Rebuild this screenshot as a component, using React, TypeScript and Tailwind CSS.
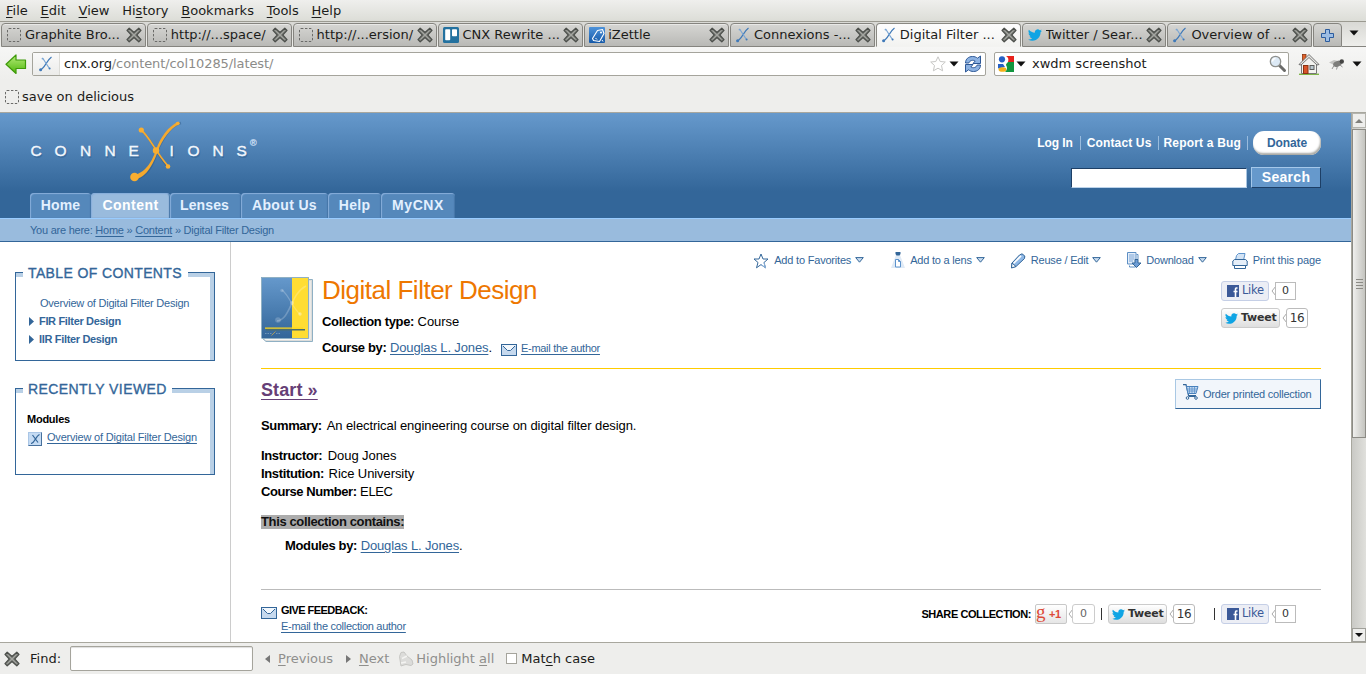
import React from "react";

const CloseX = () => (
  <svg width="16" height="16" viewBox="0 0 16 16" className="shrink-0">
    <path d="M3.2 1.2 8 5.6 12.8 1.2 15 3.4 10.7 8 15 12.6 12.8 14.8 8 10.4 3.2 14.8 1 12.6 5.3 8 1 3.4Z" fill="#878984" stroke="#4d504c" strokeWidth="1.3" strokeLinejoin="round" />
    <path d="M3.5 3.5 12.5 12.5M12.5 3.5 3.5 12.5" stroke="#a3a5a0" strokeWidth="1" />
  </svg>
);

const Dashed = () => (
  <svg width="16" height="16" viewBox="0 0 16 16" className="shrink-0">
    <rect x="1.5" y="1.5" width="13" height="13" rx="1.5" fill="none" stroke="#6b6b69" strokeDasharray="2.4 1.6" />
  </svg>
);

const CnxIcon = () => (
  <svg width="16" height="16" viewBox="0 0 16 16" className="shrink-0">
    <path d="M2 14C7 12.5 8 5 13.5 1" fill="none" stroke="#3f79b8" strokeWidth="1.2" />
    <path d="M4.5 2C6 4 9 9 11.5 12.5" fill="none" stroke="#7ba6d4" strokeWidth="1.2" />
    <circle cx="2.6" cy="13.7" r="1.5" fill="#3f79b8" />
    <circle cx="4.5" cy="2.6" r="0.9" fill="#7ba6d4" />
    <circle cx="11.6" cy="12.4" r="1" fill="#3f79b8" />
  </svg>
);

const Trello = () => (
  <svg width="16" height="16" viewBox="0 0 16 16" className="shrink-0">
    <rect width="16" height="16" rx="1.5" fill="#23719f" />
    <rect x="2.2" y="2.2" width="5" height="11" rx="0.8" fill="#fff" />
    <rect x="9" y="2.2" width="5" height="7" rx="0.8" fill="#fff" />
  </svg>
);

const IZettle = () => (
  <svg width="16" height="16" viewBox="0 0 16 16" className="shrink-0">
    <defs>
      <linearGradient id="iz" x1="0" y1="0" x2="0" y2="1">
        <stop offset="0" stopColor="#4e93da" />
        <stop offset="1" stopColor="#1559a8" />
      </linearGradient>
    </defs>
    <rect width="16" height="16" rx="1" fill="url(#iz)" />
    <path d="M3.5 11.5 8.500 3.5 13.5 2.5 15 6.5 10.5 14.5 4.5 13.5Z" fill="none" stroke="#fff" strokeWidth="1.1" strokeLinejoin="round" />
    <circle cx="12" cy="5.6" r="1" fill="#fff" />
    <path d="M6.500 11 8 12.500M13 13l1 1.500" stroke="#fff" strokeWidth="1" />
  </svg>
);

const Bird = ({ size = 14 }: { size?: number }) => (
  <svg width={size} height={size} viewBox="0 0 24 24" className="shrink-0">
    <path d="M23.95 4.57a10 10 0 0 1-2.82.77 4.96 4.96 0 0 0 2.16-2.72c-.95.55-2 .96-3.13 1.18a4.92 4.92 0 0 0-8.38 4.48C7.69 8.1 4.07 6.13 1.64 3.16a4.92 4.92 0 0 0 1.52 6.57 4.9 4.9 0 0 1-2.23-.61v.06c0 2.38 1.7 4.37 3.95 4.82a5 5 0 0 1-2.21.09 4.94 4.94 0 0 0 4.6 3.42A9.87 9.87 0 0 1 0 19.54a14 14 0 0 0 7.55 2.21c9.05 0 14-7.5 14-13.98 0-.21 0-.42-.02-.63a9.94 9.94 0 0 0 2.46-2.55z" fill="#0fa4e4" />
  </svg>
);

const Down = () => (
  <svg width="10" height="6" viewBox="0 0 10 6" className="shrink-0">
    <path d="M0.5 0.5H9.5L5 5.5Z" fill="#111" />
  </svg>
);

const tabs: { label: string; icon: React.ReactNode; active?: boolean }[] = [
  { label: "Graphite Bro...", icon: <Dashed /> },
  { label: "http://...space/", icon: <Dashed /> },
  { label: "http://...ersion/", icon: <Dashed /> },
  { label: "CNX Rewrite ...", icon: <Trello /> },
  { label: "iZettle", icon: <IZettle /> },
  { label: "Connexions -...", icon: <CnxIcon /> },
  { label: "Digital Filter ...", icon: <CnxIcon />, active: true },
  { label: "Twitter / Sear...", icon: <span className="flex w-[16px] justify-center"><Bird /></span> },
  { label: "Overview of ...", icon: <CnxIcon /> },
];

function Chrome() {
  return (
    <div className="font-['DejaVu_Sans',sans-serif] text-[13px] text-[#1c1c1a]">
      <div className="flex h-[22px] gap-[12.8px] border-b border-[#9b9a91] bg-gradient-to-b from-[#efefed] to-[#dcddd7] pl-[6px] leading-[21px]">
        <span><u>F</u>ile</span>
        <span><u>E</u>dit</span>
        <span><u>V</u>iew</span>
        <span>Hi<u>s</u>tory</span>
        <span><u>B</u>ookmarks</span>
        <span><u>T</u>ools</span>
        <span><u>H</u>elp</span>
      </div>
      <div className="flex h-[25px] items-end bg-gradient-to-b from-[#d9d9d5] to-[#efefec] pl-px">
        {tabs.map((t) => (
          <div
            key={t.label}
            className={
              t.active
                ? "mr-px flex h-[24px] w-[144.8px] shrink-0 items-center rounded-t-[4px] border border-b-[#f3f3f1] border-[#8a8983] bg-gradient-to-b from-[#fdfdfd] to-[#f3f3f1] pr-[3px] pl-[4px]"
                : "mr-px flex h-[24px] w-[144.8px] shrink-0 items-center rounded-t-[4px] border border-[#85847f] bg-gradient-to-b from-[#d6d6d3] to-[#b9b9b6] pr-[3px] pl-[4px] shadow-[inset_0_1px_0_#e8e8e6]"
            }
          >
            {t.icon}
            <span className="ml-[3px] min-w-0 flex-1 overflow-hidden whitespace-nowrap">{t.label}</span>
            <CloseX />
          </div>
        ))}
        <div className="flex h-[24px] w-[29px] shrink-0 items-center justify-center rounded-t-[4px] border border-[#85847f] bg-gradient-to-b from-[#d6d6d3] to-[#b9b9b6]">
          <svg width="15" height="15" viewBox="0 0 15 15">
            <path d="M5.5 1.5h4v4h4v4h-4v4h-4v-4h-4v-4h4z" fill="#9dbde3" stroke="#2c5c9e" />
          </svg>
        </div>
        <div className="flex h-[24px] flex-1 items-center justify-center border-b border-[#85847f] pb-[3px]">
          <Down />
        </div>
      </div>
      <div className="flex h-[33px] items-center bg-gradient-to-b from-[#f6f6f5] to-[#eeeeec] pt-[1px] pl-[5px]">
        <svg width="22" height="20" viewBox="0 0 22 20" className="shrink-0">
          <defs>
            <linearGradient id="ga" x1="0" y1="0" x2="0" y2="1">
              <stop offset="0" stopColor="#b6ec7a" />
              <stop offset="1" stopColor="#4fb70c" />
            </linearGradient>
          </defs>
          <path d="M1 10.2 11 1v5h9.5v8.500H11v5z" fill="url(#ga)" stroke="#3f9a0a" strokeWidth="1.2" strokeLinejoin="round" />
        </svg>
        <div className="ml-[5px] flex h-[24px] w-[954px] shrink-0 items-center rounded-[2px] border border-[#a5a49c] bg-white">
          <div className="flex h-full w-[27px] items-center justify-center border-r border-[#dcdcd8] bg-gradient-to-b from-[#fafafa] to-[#ececea]">
            <CnxIcon />
          </div>
          <span className="ml-[4px] flex-1 tracking-[-0.1px] text-[#8c8c89]"><span className="text-[#1c1c1a]">cnx.org</span>/content/col10285/latest/</span>
          <svg width="16" height="16" viewBox="0 0 16 16">
            <path d="M8 .8 10.200 5.500 15.300 6 11.500 9.500 12.600 14.800 8 12.200 3.400 14.800 4.500 9.500.7 6 5.800 5.500Z" fill="#fff" stroke="#c6c6c4" />
          </svg>
          <span className="ml-[3px]"><Down /></span>
          <svg width="18" height="18" viewBox="0 0 18 18" className="mr-[3px] ml-[5px]">
            <path d="M1.500 8C1.500 4 4.500 1.500 8.500 1.500 10.500 1.500 12 2 13.500 3.200L16.500 1v7.500H9L11.200 6C9 4.800 6 5 4.800 8Z" fill="#8db2e2" stroke="#2c5796" strokeLinejoin="round" />
            <path d="M16.500 10c0 4-3 6.500-7 6.500-2 0-3.500-.5-5-1.700L1.500 17V9.500H9L6.800 12c2.200 1.200 5.200 1 6.400-2Z" fill="#8db2e2" stroke="#2c5796" strokeLinejoin="round" />
          </svg>
        </div>
        <div className="ml-[8px] flex h-[24px] w-[295px] shrink-0 items-center rounded-[2px] border border-[#a5a49c] bg-white pl-[3px]">
          <svg width="16" height="16" viewBox="0 0 16 16">
            <path d="M8 0h8v6h-6C11 3 10 1 8 0Z" fill="#e8221c" />
            <path d="M10 6h6v10H7c3-3 2-5 1-7 0-1 1-2 2-3Z" fill="#12963f" />
            <circle cx="4" cy="3.300" r="3.100" fill="#2660c4" />
            <path d="M0 8h5l2 3-7 1.500Z" fill="#2660c4" />
            <ellipse cx="4.500" cy="13.500" rx="3.900" ry="2.300" fill="#f4b119" />
          </svg>
          <span className="ml-[2px]"><Down /></span>
          <span className="ml-[6px] flex-1">xwdm screenshot</span>
          <svg width="18" height="18" viewBox="0 0 18 18" className="mr-[1px]">
            <path d="M10 10 15.500 15.500" stroke="#6b6b69" strokeWidth="3" strokeLinecap="round" />
            <circle cx="6.500" cy="6.500" r="5.200" fill="#dce9f5" stroke="#8f918e" strokeWidth="1.300" />
            <path d="M3.500 6.500a3 3 0 0 1 3-3" stroke="#fff" strokeWidth="1.500" fill="none" />
          </svg>
        </div>
        <svg width="22" height="22" viewBox="0 0 22 22" className="ml-[9px] shrink-0">
          <path d="M1 21.300H21" stroke="#7fb548" strokeWidth="1.400" />
          <rect x="4.500" y="1.500" width="3.500" height="6" fill="#e0622a" stroke="#8a3310" strokeWidth=".8" />
          <path d="M3.500 10 11 3l7.500 7v10.500h-15z" fill="#f3f3f0" stroke="#777" />
          <path d="M1 11.500 11 1.500l10 10-2 .5-8-7.500L3 12Z" fill="#e6e6e3" stroke="#666" strokeWidth=".9" />
          <rect x="5.500" y="12.500" width="4.500" height="8" fill="#d9532a" stroke="#8a3310" />
          <rect x="12" y="12.500" width="4" height="4" fill="#b9c7cf" stroke="#5e5e5c" />
        </svg>
        <svg width="17" height="16" viewBox="0 0 17 16" className="ml-[9px] shrink-0">
          <path d="M0 6.500 5 4 11 5.500 5 9Z" fill="#c4c4c2" />
          <ellipse cx="8.500" cy="7.800" rx="4.500" ry="2.800" fill="#7d7d7b" transform="rotate(-20 8.500 7.800)" />
          <circle cx="12.800" cy="5.500" r="2.200" fill="#444443" />
          <path d="M5 9.500 3 13M8.500 10l-1 3.500M11 9l2.500 2" stroke="#888" strokeWidth=".9" />
        </svg>
        <span className="ml-[6px]"><Down /></span>
      </div>
      <div className="flex h-[33px] items-center border-b border-[#a8a79e] bg-[#eeeeec] pt-[2px] pl-[4px]">
        <Dashed />
        <span className="ml-[2px]">save on delicious</span>
      </div>
    </div>
  );
}

const navTabs = [
  { label: "Home", cls: "w-[61px] bg-[#5588bb] text-[#e3f0ff] tracking-[0.2px]" },
  { label: "Content", cls: "w-[79px] bg-[#99bbdd] text-white tracking-[0.45px]" },
  { label: "Lenses", cls: "w-[71px] bg-[#5588bb] text-[#e3f0ff] pr-[2px] tracking-[0.1px]" },
  { label: "About Us", cls: "w-[87px] bg-[#5588bb] text-[#e3f0ff] tracking-[0.35px]" },
  { label: "Help", cls: "w-[53px] bg-[#5588bb] text-[#e3f0ff] tracking-[0.3px]" },
  { label: "MyCNX", cls: "w-[74px] bg-[#5588bb] text-[#e3f0ff] tracking-[0.6px]" },
];

function Header() {
  return (
    <header>
      <div className="flex h-[105px] flex-col justify-between bg-[linear-gradient(#6699cc,#336699_78px)]">
        <div className="flex justify-between">
          <svg width="250" height="72" viewBox="25 113 250 72" className="ml-[25px]">
            <g fill="#24507c" opacity=".35" fontFamily="Liberation Sans" fontSize="16">
              <text x="31.500 55.500 81 105.500 129.500 171 188.500 213.500 237.500" y="157.500">CONNEIONS</text>
            </g>
            <g fill="#f2f7fd" stroke="#f2f7fd" strokeWidth=".4" fontFamily="Liberation Sans" fontSize="15.500">
              <text x="30.500 54.500 80 104.500 128.500 169.500 187.500 212.500 236.500" y="156">CONNEIONS</text>
            </g>
            <g fill="none" stroke="#27527f" opacity=".4">
              <path d="M136 179C154 174 156 150 160 145C166 133 172 125 181 123" strokeWidth="2.500" />
              <path d="M143 132C151 138 158 158 169 168" strokeWidth="2" />
            </g>
            <path d="M133 175.500C148 172 153 158 156 150C160 138 168 126 179 121.500L180 124C170 128 162 140 158 151C153 165 145 179 135 179Z" fill="#f5a92e" />
            <path d="M141 130C150 137 154 150 168 166" fill="none" stroke="#f5a92e" strokeWidth="1.800" />
            <circle cx="134.500" cy="177" r="4.300" fill="#f9ae31" />
            <circle cx="141.300" cy="130" r="2.600" fill="#f9ae31" />
            <circle cx="156" cy="150.500" r="3.200" fill="#f9ae31" />
            <circle cx="168" cy="166.500" r="2.300" fill="#f9ae31" />
            <circle cx="177.500" cy="123.500" r="1.700" fill="#f9ae31" />
            <text x="250" y="145.500" fontSize="9" fill="#c6dcf2" stroke="#c6dcf2" strokeWidth=".3" fontFamily="Liberation Sans">®</text>
          </svg>
          <div className="mr-[30px] flex flex-col items-end pt-[18px] font-bold text-white">
            <div className="flex items-center text-[12px] tracking-[0.15px]">
              <span className="border-r border-[#99bbdd] pr-[7px] leading-[14px] tracking-[-0.1px]">Log In</span>
              <span className="border-r border-[#99bbdd] pr-[6px] pl-[6px] leading-[14px]">Contact Us</span>
              <span className="border-r border-[#99bbdd] pr-[6px] pl-[5px] leading-[14px] tracking-[0.18px]">Report a Bug</span>
              <span className="ml-[5px] flex h-[24px] w-[68px] items-center justify-center rounded-[11px] bg-white tracking-[-0.1px] text-[#336699] shadow-[inset_-1px_-2px_2px_#a9a9a4]">Donate</span>
            </div>
            <div className="mt-[12px] flex items-center gap-[4px]">
              <div className="h-[20px] w-[176px] border border-t-[#1d3f66] border-r-[#a9c6e2] border-b-[#bcd3ea] border-l-[#1d3f66] bg-white" />
              <div className="flex h-[21px] w-[70px] items-center justify-center border border-t-[#a5c8ea] border-r-[#1d3f66] border-b-[#1d3f66] border-l-[#a5c8ea] bg-[#6699cc] text-[14px] tracking-[0.3px]">Search</div>
            </div>
          </div>
        </div>
        <div className="flex pl-[30px] text-[14px] font-bold">
          {navTabs.map((t) => (
            <div key={t.label} className={`flex h-[25px] items-center justify-center rounded-t-[4px] shadow-[inset_1px_1px_1px_#88aedb,inset_-1px_0_1px_#4576a8] ${t.cls}`}>
              {t.label}
            </div>
          ))}
        </div>
      </div>
      <div className="h-[24px] border-t border-b border-t-[#99ccff] border-b-[#336699] bg-[#99bbdd] pl-[30px] text-[11px] leading-[23px] tracking-[-0.24px] text-[#336699]">
        You are here: <u>Home</u> » <u>Content</u> » Digital Filter Design
      </div>
    </header>
  );
}

function Box({ title, titleCls, children }: { title: string; titleCls: string; children: React.ReactNode }) {
  return (
    <section className="flex w-[200px] flex-col text-[#336699]">
      <div className="flex h-[5px]">
        <div className="w-[8px] border-t border-l border-[#336699] bg-[#b9d0e6]" />
        <h2 className={`-mt-[9px] h-[20px] pl-[5px] text-[14px] leading-[20px] whitespace-nowrap [-webkit-text-stroke:0.35px] ${titleCls}`}>{title}</h2>
        <div className="flex-1 border-t border-r border-[#336699] bg-[#b9d0e6]" />
      </div>
      <div className="flex flex-1 border-x border-b border-[#336699]">
        <div className="flex-1">{children}</div>
        <div className="w-[4px] bg-[#b9d0e6]" />
      </div>
    </section>
  );
}

const TocArrow = () => (
  <svg width="5" height="9" viewBox="0 0 5 9" className="mr-[5px]">
    <path d="M0 0 5 4.500 0 9Z" fill="#336699" />
  </svg>
);

function Sidebar() {
  return (
    <aside className="w-[231px] shrink-0 border-r border-[#cccccc] pt-[30px] pl-[15px]">
      <div className="flex h-[89px]">
        <Box title="TABLE OF CONTENTS" titleCls="w-[165px] tracking-[0.38px]">
          <div className="flex flex-col pt-[17px] pl-[13px] text-[11px] leading-[18px]">
            <span className="pl-[11px] tracking-[-0.22px] whitespace-nowrap">Overview of Digital Filter Design</span>
            <span className="flex items-center font-bold tracking-[-0.33px]"><TocArrow />FIR Filter Design</span>
            <span className="flex items-center font-bold tracking-[-0.33px]"><TocArrow />IIR Filter Design</span>
          </div>
        </Box>
      </div>
      <div className="mt-[27px] flex h-[87px]">
        <Box title="RECENTLY VIEWED" titleCls="w-[149px] tracking-[0.42px]">
          <div className="pt-[17px] pl-[11px] text-[11px] leading-[18px]">
            <div className="font-bold tracking-[-0.25px] text-black">Modules</div>
            <div className="flex items-center tracking-[-0.2px]">
              <span className="mt-[3px] mr-[5px] ml-px flex size-[14px] items-center justify-center border border-t-[#aac6e6] border-r-[#47709c] border-b-[#47709c] border-l-[#aac6e6] bg-[#c5dbf3]">
                <svg width="10" height="10" viewBox="0 0 10 10">
                  <path d="M1 9.500C5 9 5.500 2 9.500.5M2.500 1 8 8.500" fill="none" stroke="#336699" strokeWidth="1.200" />
                </svg>
              </span>
              <u className="whitespace-nowrap">Overview of Digital Filter Design</u>
            </div>
          </div>
        </Box>
      </div>
    </aside>
  );
}

const ToolDown = () => (
  <svg width="9" height="6" viewBox="0 0 9 6" className="mb-[1px] ml-[4px]">
    <path d="M.7.600H8.300L4.500 5.200Z" fill="#c9dcef" stroke="#336699" />
  </svg>
);

const Mail = () => (
  <svg width="16" height="12" viewBox="0 0 16 12" className="shrink-0">
    <rect x=".5" y=".5" width="15" height="11" fill="#c6d9ee" stroke="#336699" />
    <path d="M1 1H15L9.500 6.500H6.500Z" fill="#f2f7fc" />
    <path d="M2 2 6.500 6.500H9.500L14 2" fill="none" stroke="#336699" />
  </svg>
);

function Toolbar() {
  return (
    <div className="flex h-[18px] items-center justify-end text-[11px] tracking-[-0.2px] text-[#336699]">
      <svg width="16" height="16" viewBox="0 0 16 16" className="mt-[2px] mr-[5px]">
        <path d="M8 1 10 6H15L11 9.500 12.500 14.800 8 11.600 3.500 14.800 5 9.500 1 6H6Z" fill="#fff" stroke="#336699" />
        <path d="M11 9.500 12.500 14.800 8 11.600" fill="none" stroke="#8db3dc" />
      </svg>
      Add to Favorites<ToolDown />
      <svg width="14" height="17" viewBox="0 0 14 17" className="mr-[5px] ml-[27px]">
        <path d="M5 3H9L14 16H0Z" fill="#dfeaf6" />
        <path d="M4.500 0h5v2L8.500 3.500H5.500L4.500 2Z" fill="#336699" />
        <path d="M4.500 7.500h3l2 2V15h-5z" fill="#fff" stroke="#5d93cc" />
        <path d="M7.500 7.500v2h2" fill="none" stroke="#5d93cc" />
      </svg>
      Add to a lens<ToolDown />
      <svg width="16" height="16" viewBox="0 0 16 16" className="mt-[2px] mr-[5px] ml-[25px]">
        <path d="M1.500 14.500 2 10 9.500 2 12 .8 14.800 3 14.500 5.500 6 13.500Z" fill="#8fb8e6" stroke="#336699" strokeLinejoin="round" />
        <path d="M3.500 10.500 11 2.800" stroke="#fff" strokeWidth="1.700" />
        <path d="M2 10 6 13.500 1.500 15Z" fill="#fff" stroke="#336699" />
      </svg>
      Reuse / Edit<ToolDown />
      <svg width="16" height="17" viewBox="0 0 16 17" className="mt-px mr-[4px] ml-[25px]">
        <path d="M1.500.5h8.500v11.500h-8.500z" fill="#e4eefa" stroke="#5d8fc4" />
        <path d="M3.500 13.500v1.500h6M10.500 2.500h1.500v5" fill="none" stroke="#5d8fc4" />
        <path d="M3 3h5.500M3 5h5.500M3 7h5.500M3 9h4" stroke="#7aa5d6" />
        <path d="M9 7.500h3V11h3L10.500 15.500 6 11h3z" fill="#6e9ed6" stroke="#336699" />
      </svg>
      Download<ToolDown />
      <svg width="16" height="16" viewBox="0 0 16 16" className="mt-px mr-[5px] ml-[25px]">
        <path d="M3.500 7 4.500 2.500 6.500.5H13L12.500 3 11.500 7" fill="#d3e3f4" stroke="#5d93cc" />
        <path d="M.8 8 2.500 6.500H13.500L15.200 8V12.500H.8Z" fill="#e6eff9" stroke="#336699" />
        <path d="M2.500 12.500h11v3h-11z" fill="#fff" stroke="#336699" />
      </svg>
      <span className="tracking-[-0.13px]">Print this page</span>
    </div>
  );
}

const Notch = () => (
  <svg width="5" height="10" viewBox="0 0 5 10" className="-mr-px shrink-0">
    <path d="M5 0 1 5 5 10" fill="#fff" stroke="#aaa" />
  </svg>
);

function Like() {
  return (
    <div className="flex items-center font-['DejaVu_Sans',sans-serif] text-[11px] tracking-normal">
      <div className="flex h-[20px] w-[48px] items-center rounded-[3px] border border-[#c5cfe6] bg-[#eceef5] pl-[5px] text-[#3b5998]">
        <svg width="12" height="12" viewBox="0 0 12 12" className="mr-[3px] shrink-0">
          <rect width="12" height="12" fill="#3b5998" />
          <path d="M10.500 3H9.300Q8.500 3 8.500 4V12M6.500 6.500h4" fill="none" stroke="#fff" strokeWidth="1.600" />
        </svg>
        <span className="text-[11.5px] tracking-[-0.3px]">Like</span>
      </div>
      <span className="ml-[2px] flex items-center"><Notch /></span>
      <div className="flex h-[18px] w-[21px] items-center justify-center border border-[#bbb] bg-white text-[#333]">0</div>
    </div>
  );
}

function Tweet() {
  return (
    <div className="flex items-center font-['DejaVu_Sans',sans-serif] text-[11px] tracking-normal text-[#333]">
      <div className="flex h-[20px] w-[59px] items-center rounded-[3px] border border-[#ccc] bg-gradient-to-b from-white to-[#dedede] pl-[3px] font-bold tracking-[-0.2px]">
        <Bird size={13} />
        <span className="ml-[3px]">Tweet</span>
      </div>
      <span className="ml-[2px] flex items-center"><Notch /></span>
      <div className="flex h-[20px] w-[22px] items-center justify-center rounded-[3px] border border-[#bbb] bg-white text-[12px] tracking-[-0.4px]">16</div>
    </div>
  );
}

function Book() {
  return (
    <svg width="53" height="66" viewBox="0 0 53 66" className="shrink-0">
      <defs>
        <linearGradient id="bk" x1="0" y1="0" x2="0" y2="1">
          <stop offset="0" stopColor="#6699cc" />
          <stop offset="1" stopColor="#336699" />
        </linearGradient>
      </defs>
      <path d="M47 2.500H51.500V64.500H5L1 61" fill="#dcdcda" stroke="#8fb0c4" />
      <path d="M49 4V62.500H4" fill="none" stroke="#f7f7f5" />
      <rect x="0" y="0" width="31" height="61" fill="url(#bk)" />
      <rect x="31" y="0" width="17" height="61" fill="#ffdd33" />
      <path d="M.5 61V.5H47.500V61.500H.5" fill="none" stroke="#8fb0c4" />
      <g fill="none" stroke="#fff" opacity=".22">
        <path d="M16 44C30 42 29 17 45 9" strokeWidth="1.600" />
        <path d="M21 13C28 18 32 32 39 37" strokeWidth="1.300" />
      </g>
      <circle cx="17" cy="43" r="2.800" fill="#fff" opacity=".2" />
      <circle cx="21" cy="13.500" r="1.700" fill="#fff" opacity=".2" />
      <circle cx="31" cy="26" r="2" fill="#fff" opacity=".3" />
      <circle cx="39" cy="37" r="1.700" fill="#fff" opacity=".4" />
      <path d="M5 52.700H44" stroke="#4a6d6d" strokeWidth="1.600" />
      <path d="M4 51.200H42" stroke="#ffd91a" strokeWidth="1.200" />
      <path d="M4 56.500h7m4 0h4" stroke="#6f96b8" strokeDasharray="1.500 1" />
      <path d="m10.500 58.500 4-4" stroke="#a89a5a" />
    </svg>
  );
}

const link = "text-[#336699] underline underline-offset-[2px]";

function Main() {
  return (
    <main className="w-[1060px] ml-[30px] pt-[9px] text-[13px] tracking-[-0.08px] text-black [&_b]:tracking-[-0.34px]">
      <Toolbar />
      <div className="flex h-[100px] border-b border-b-[#ffcc00] pt-[8px]">
        <div className="mr-[8px]"><Book /></div>
        <div className="flex-1">
          <h1 className="-mt-px text-[26px] leading-[28px] tracking-[-0.5px] text-[#ee7700]">Digital Filter Design</h1>
          <div className="mt-[9px] leading-[18px]"><b>Collection type:</b> Course</div>
          <div className="mt-[8px] flex items-center leading-[18px]">
            <b className="mr-[3.5px]">Course by:</b>
            <span className={`${link} tracking-[-0.13px]`}>Douglas L. Jones</span>.
            <span className="mt-[3px] mr-[4px] ml-[9px]"><Mail /></span>
            <span className={`${link} text-[11px] tracking-[-0.28px]`}>E-mail the author</span>
          </div>
        </div>
        <div className="flex w-[100px] flex-col gap-[7px] pt-[4px]">
          <Like />
          <Tweet />
        </div>
      </div>
      <div className="flex justify-between pt-[10px]">
        <div>
          <div className="h-[24px] text-[18px] leading-[22px] font-bold tracking-[0.1px] text-[#663f77] underline decoration-[1px] underline-offset-[3px]">Start »</div>
          <div className="mt-[14px] leading-[18px]"><b className="mr-[2px]">Summary:</b> An electrical engineering course on digital filter design.</div>
          <div className="mt-[12px] leading-[18px]"><b className="mr-[2px]">Instructor:</b> Doug Jones</div>
          <div className="leading-[18px]"><b className="mr-[1px]">Institution:</b> Rice University</div>
          <div className="leading-[18px]"><b className="!tracking-[-0.45px]">Course Number:</b> <span className="tracking-[-0.4px]">ELEC</span></div>
          <div className="mt-[14px] flex leading-[14px]"><b className="bg-[#acacac] !tracking-[-0.37px] text-[#111]">This collection contains:</b></div>
          <div className="mt-[8px] pl-[24px] leading-[18px]"><b>Modules by:</b> <span className={`${link} tracking-[-0.13px]`}>Douglas L. Jones</span>.</div>
        </div>
        <div className="flex h-[30px] w-[146px] items-center border border-t-[#a9c8e4] border-r-[#336699] border-b-[#336699] border-l-[#a9c8e4] bg-[#f2f6fb] pl-[7px] text-[11px] tracking-[-0.22px] whitespace-nowrap text-[#336699]">
          <svg width="16" height="16" viewBox="0 0 16 16" className="mr-[4px] mb-[5px] shrink-0">
            <path d="M0 .7H3L5.500 11.500H13" fill="none" stroke="#336699" strokeWidth="1.200" />
            <path d="M3.500 2.500H15L13 9.500H5Z" fill="#c4daf1" stroke="#4a82bd" />
            <path d="M6.500 3v6M9 3v6M11.500 3v6M4 5h10M4.500 7h9" stroke="#5d93cc" strokeWidth=".8" />
            <circle cx="4.500" cy="14" r="1.300" fill="#fff" stroke="#336699" />
            <circle cx="13" cy="14" r="1.300" fill="#fff" stroke="#336699" />
            <path d="M5.500 12.500h7" stroke="#336699" />
          </svg>
          Order printed collection
        </div>
      </div>
      <div className="mt-[34px] flex justify-between border-t border-[#bbbbbb] pt-[13px] text-[11px]">
        <div className="flex">
          <span className="mt-[4px] mr-[4px]"><Mail /></span>
          <div className="leading-[16px]">
            <div className="-mt-px mb-px font-bold tracking-[-0.55px]">GIVE FEEDBACK:</div>
            <div className={`${link} -mt-px tracking-[-0.28px]`}>E-mail the collection author</div>
          </div>
        </div>
        <div className="flex h-[22px] items-center pr-[25px]">
          <span className="mr-[4px] font-bold tracking-[-0.42px]">SHARE COLLECTION:</span>
          <div className="flex h-[20px] w-[32px] items-center rounded-[2px] border border-[#c8c8c8] bg-gradient-to-b from-white to-[#e6e6e6] font-bold tracking-[-0.4px] text-[#dd4b39]">
            <span className="mb-[4px] w-[13px] font-['Liberation_Serif',serif] text-[19px] leading-[16px] font-normal">g</span>
            <span>+1</span>
          </div>
          <span className="ml-[1px] flex"><Notch /></span>
          <div className="flex h-[20px] w-[23px] items-center justify-center rounded-[3px] border border-[#ccc] font-['DejaVu_Sans',sans-serif] text-[#666]">0</div>
          <span className="mx-[6px] h-[12px] w-px bg-[#333]" />
          <Tweet />
          <span className="mr-[6px] ml-[19px] h-[12px] w-px bg-[#333]" />
          <Like />
        </div>
      </div>
    </main>
  );
}

function Scrollbar() {
  return (
    <div className="flex w-[15px] shrink-0 flex-col border-l border-[#a8a79e] bg-gradient-to-r from-[#c9c9c5] to-[#e0e0dc]">
      <div className="flex h-[15px] items-center justify-center border border-[#b4b4ae] bg-[#eeeeec]">
        <svg width="8" height="4" viewBox="0 0 8 4"><path d="M0 4 4 0 8 4Z" fill="#80807c" /></svg>
      </div>
      <div className="mt-px flex h-[309px] flex-col items-center justify-center gap-[2px] border border-[#8c8b85] bg-gradient-to-r from-[#efefed] to-[#c4c4bf]">
        <div className="h-px w-[7px] bg-[#8c8b85]" />
        <div className="h-px w-[7px] bg-[#8c8b85]" />
        <div className="h-px w-[7px] bg-[#8c8b85]" />
        <div className="h-px w-[7px] bg-[#8c8b85]" />
      </div>
      <div className="flex-1" />
      <div className="flex h-[14px] items-center justify-center border border-[#a0a09a] bg-[#eeeeec]">
        <svg width="8" height="4" viewBox="0 0 8 4"><path d="M0 0H8L4 4Z" fill="#111" /></svg>
      </div>
    </div>
  );
}

function FindBar() {
  return (
    <div className="flex h-[32px] items-center border-t border-[#a8a79e] bg-[#eeeeec] pl-[4px] font-['DejaVu_Sans',sans-serif] text-[13px] text-[#8f8f8c]">
      <CloseX />
      <span className="ml-[10px] text-[#1c1c1a]">Find:</span>
      <div className="mr-[12px] ml-[9px] h-[25px] w-[183px] rounded-[2px] border border-[#a5a49c] bg-white shadow-[inset_0_1px_1px_#ddd]" />
      <svg width="5" height="8" viewBox="0 0 5 8"><path d="M5 0V8L0 4Z" fill="#777" /></svg>
      <span className="ml-[8px]"><u>P</u>revious</span>
      <svg width="5" height="8" viewBox="0 0 5 8" className="ml-[13px]"><path d="M0 0V8L5 4Z" fill="#777" /></svg>
      <span className="ml-[8px]"><u>N</u>ext</span>
      <svg width="16" height="16" viewBox="0 0 16 16" className="ml-[9px]">
        <path d="M1.500 5.500 3 1.500 6 1l3 4 5 4 1 4-2 1.500-5-1-2 .5-3 1Z" fill="#dcdcda" stroke="#c6c6c3" />
        <path d="M4 7.500 9 5M3 12l5-1" stroke="#f4f4f2" strokeWidth="1.500" />
      </svg>
      <span className="ml-[2px]">Highlight <u>a</u>ll</span>
      <div className="ml-[12px] size-[11px] border border-[#a5a49c] bg-white" />
      <span className="ml-[4px] text-[#1c1c1a]">Mat<u>c</u>h case</span>
    </div>
  );
}

export default function App() {
  return (
    <div className="flex h-[674px] w-[1366px] flex-col overflow-hidden bg-white font-['Liberation_Sans',sans-serif] [&_u]:underline-offset-[2px]">
      <Chrome />
      <div className="flex min-h-0 flex-1">
        <div className="flex min-h-0 w-[1351px] flex-col overflow-hidden">
          <Header />
          <div className="flex min-h-0 flex-1">
            <Sidebar />
            <Main />
          </div>
        </div>
        <Scrollbar />
      </div>
      <FindBar />
    </div>
  );
}
